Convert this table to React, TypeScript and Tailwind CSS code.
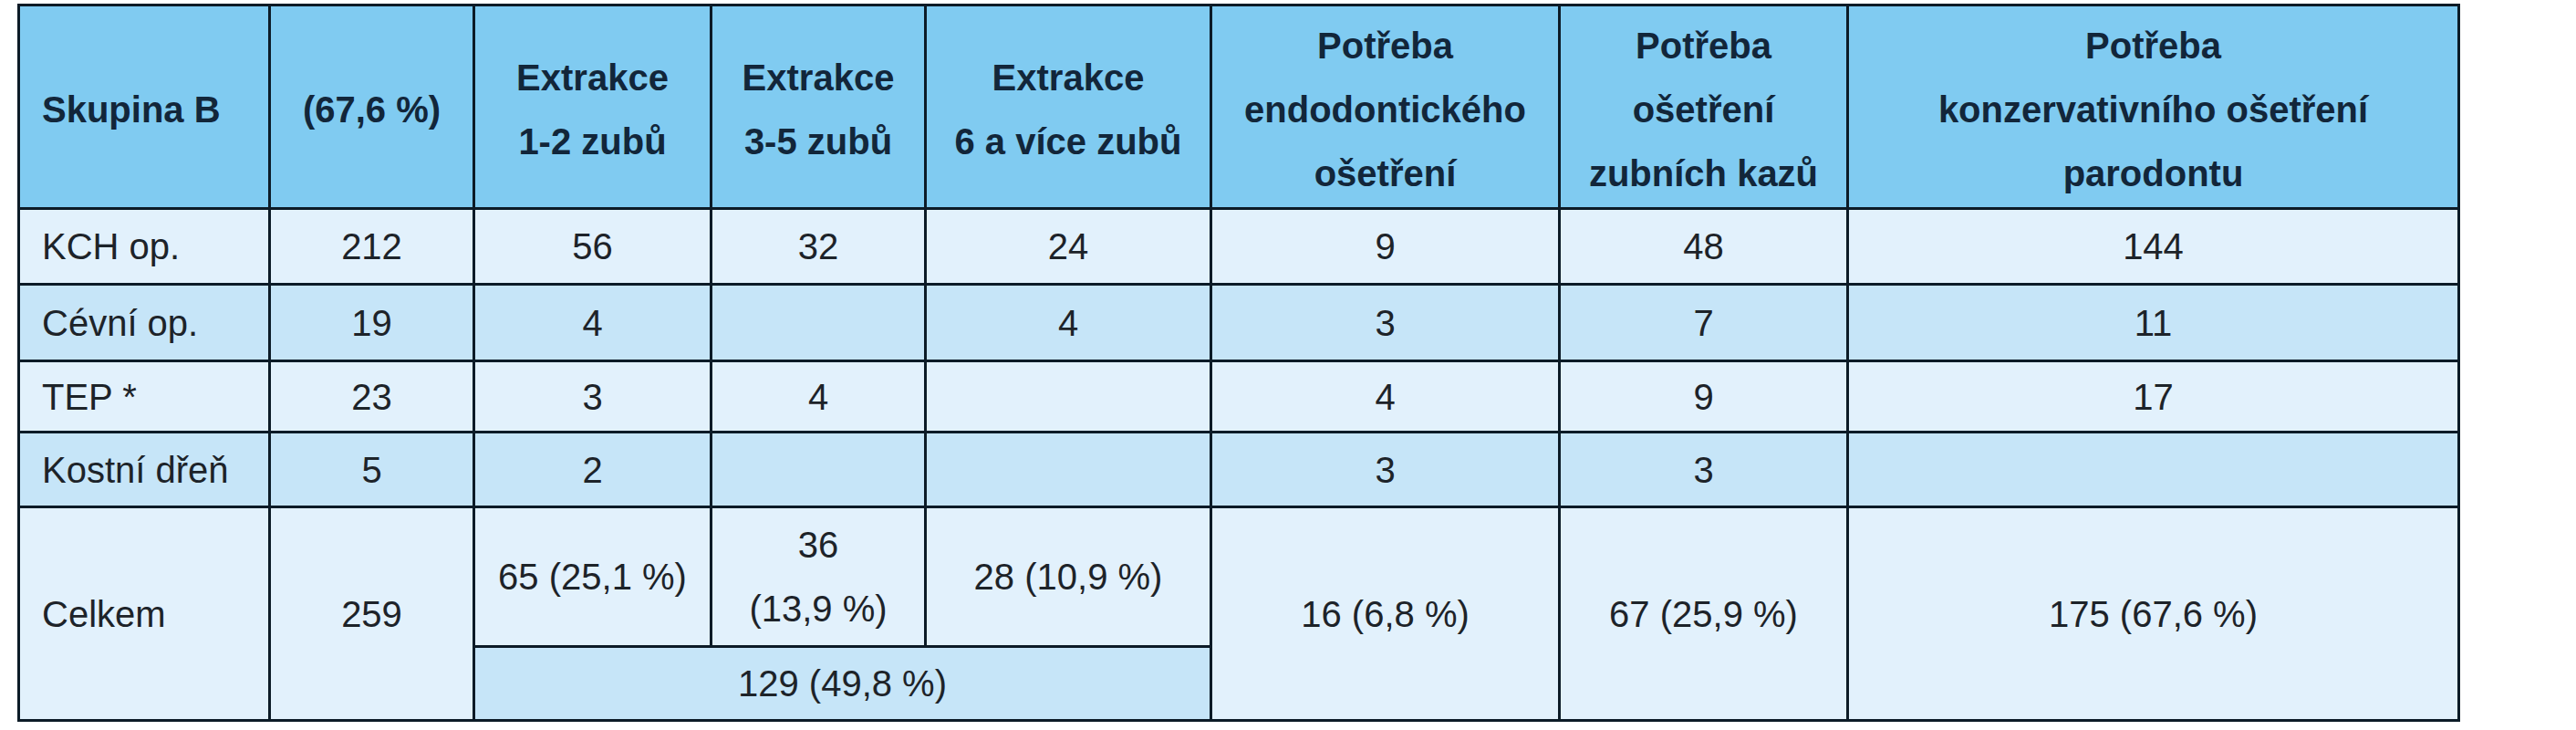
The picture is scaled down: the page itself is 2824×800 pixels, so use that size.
import React from "react";

const B = "border-[3px] border-[#0c1b27]";
const HEAD = `${B} bg-[#80cbf1] text-center align-middle font-bold text-[#12263a] pt-[6px]`;
const LIGHT = "bg-[#e2f1fc]";
const DARK = "bg-[#c6e5f8]";
const CELL = `${B} text-center align-middle`;
const FIRST = `${B} text-left align-middle pl-[24px]`;

type Row = { label: string; cells: string[]; dark: boolean };

const rows: Row[] = [
  { label: "KCH op.", cells: ["212", "56", "32", "24", "9", "48", "144"], dark: false },
  { label: "Cévní op.", cells: ["19", "4", "", "4", "3", "7", "11"], dark: true },
  { label: "TEP *", cells: ["23", "3", "4", "", "4", "9", "17"], dark: false },
  { label: "Kostní dřeň", cells: ["5", "2", "", "", "3", "3", ""], dark: true },
];

const heights = ["h-[83px]", "h-[84px]", "h-[78px]", "h-[82px]"];

export default function App() {
  return (
    <div className="bg-white w-[2824px] h-[800px] pt-[4px] pl-[19px]">
      <table
        className="table-fixed border-collapse w-[2678px] text-[40px] leading-[70px] text-[#1d2329]"
        style={{ fontFamily: '"Liberation Sans", Arial, sans-serif' }}
      >
        <colgroup>
          <col className="w-[275px]" />
          <col className="w-[224px]" />
          <col className="w-[260px]" />
          <col className="w-[235px]" />
          <col className="w-[313px]" />
          <col className="w-[382px]" />
          <col className="w-[316px]" />
          <col className="w-[670px]" />
        </colgroup>
        <thead>
          <tr className="h-[223px]">
            <th className={`${HEAD} text-left pl-[24px]`}>Skupina B</th>
            <th className={HEAD}>(67,6 %)</th>
            <th className={HEAD}>
              Extrakce
              <br />
              1-2 zubů
            </th>
            <th className={HEAD}>
              Extrakce
              <br />
              3-5 zubů
            </th>
            <th className={HEAD}>
              Extrakce
              <br />6 a více zubů
            </th>
            <th className={HEAD}>
              Potřeba
              <br />
              endodontického
              <br />
              ošetření
            </th>
            <th className={HEAD}>
              Potřeba
              <br />
              ošetření
              <br />
              zubních kazů
            </th>
            <th className={HEAD}>
              Potřeba
              <br />
              konzervativního ošetření
              <br />
              parodontu
            </th>
          </tr>
        </thead>
        <tbody>
          {rows.map((r, i) => (
            <tr key={r.label} className={`${heights[i]} ${r.dark ? DARK : LIGHT}`}>
              <td className={FIRST}>{r.label}</td>
              {r.cells.map((c, j) => (
                <td key={j} className={CELL}>
                  {c}
                </td>
              ))}
            </tr>
          ))}
          <tr className={`h-[153px] ${LIGHT}`}>
            <td rowSpan={2} className={FIRST}>
              Celkem
            </td>
            <td rowSpan={2} className={CELL}>
              259
            </td>
            <td className={CELL}>65 (25,1 %)</td>
            <td className={CELL}>
              36
              <br />
              (13,9 %)
            </td>
            <td className={CELL}>28 (10,9 %)</td>
            <td rowSpan={2} className={CELL}>
              16 (6,8 %)
            </td>
            <td rowSpan={2} className={CELL}>
              67 (25,9 %)
            </td>
            <td rowSpan={2} className={CELL}>
              175 (67,6 %)
            </td>
          </tr>
          <tr className="h-[81px]">
            <td colSpan={3} className={`${CELL} ${DARK}`}>
              129 (49,8 %)
            </td>
          </tr>
        </tbody>
      </table>
    </div>
  );
}
